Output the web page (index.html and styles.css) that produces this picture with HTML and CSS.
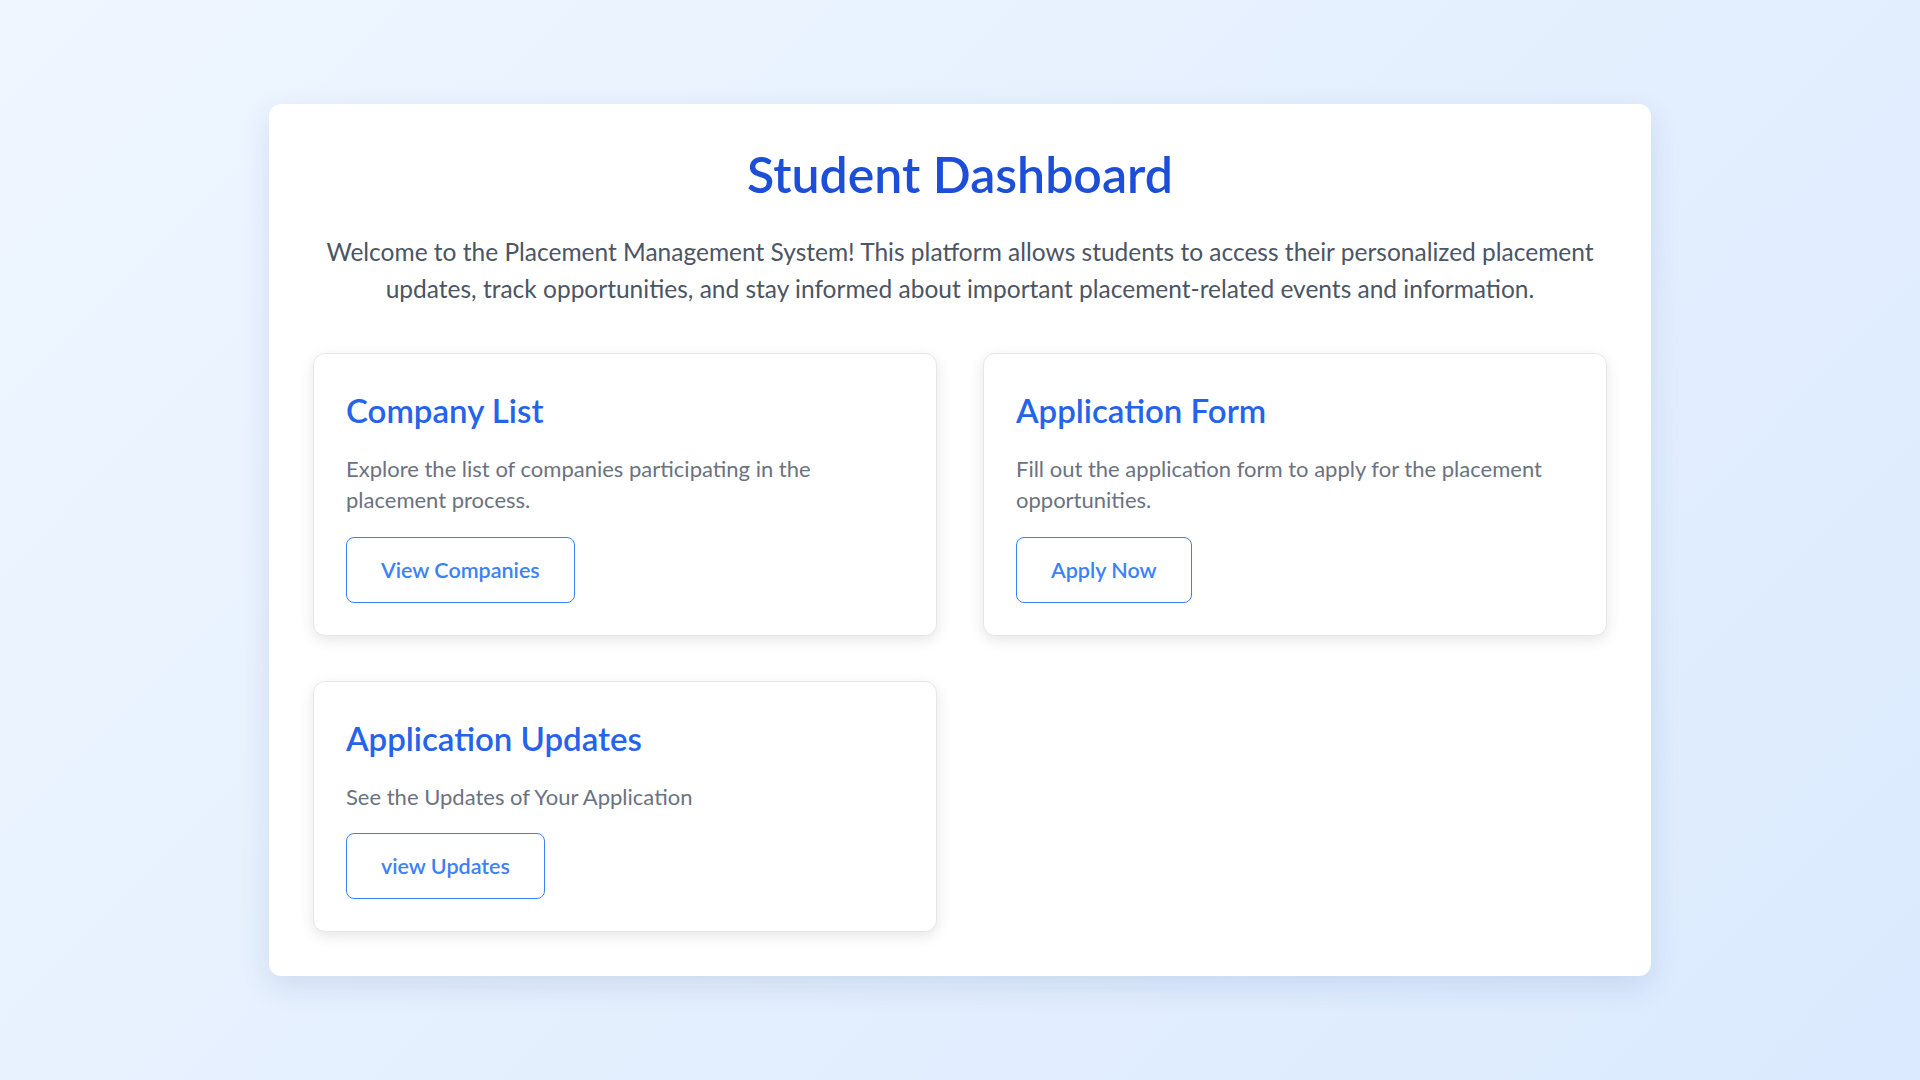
FILE: index.html
```html
<!DOCTYPE html>
<html lang="en">
<head>
<meta charset="UTF-8">
<title>Student Dashboard</title>
<link rel="stylesheet" href="styles.css">
</head>
<body>
  <main class="dashboard">
    <h1 class="dashboard-title">Student Dashboard</h1>
    <p class="dashboard-intro">Welcome to the Placement Management System! This platform allows students to access their personalized placement updates, track opportunities, and stay informed about important placement-related events and information.</p>
    <div class="card-grid">
      <section class="card">
        <h2 class="card-title">Company List</h2>
        <p class="card-text">Explore the list of companies participating in the placement process.</p>
        <a class="card-button" href="#">View Companies</a>
      </section>
      <section class="card">
        <h2 class="card-title">Application Form</h2>
        <p class="card-text">Fill out the application form to apply for the placement opportunities.</p>
        <a class="card-button" href="#">Apply Now</a>
      </section>
      <section class="card">
        <h2 class="card-title">Application Updates</h2>
        <p class="card-text">See the Updates of Your Application</p>
        <a class="card-button" href="#">view Updates</a>
      </section>
    </div>
  </main>
</body>
</html>
```
FILE: styles.css
```css
* {
  box-sizing: border-box;
}

html, body {
  margin: 0;
  padding: 0;
}

body {
  min-height: 100vh;
  display: flex;
  align-items: center;
  justify-content: center;
  background: linear-gradient(135deg, #eff6ff 0%, #dbeafe 100%);
  font-family: Lato, "Open Sans", sans-serif;
}

.dashboard {
  width: 1382px;
  background: #ffffff;
  border-radius: 12px;
  padding: 40px 44px 44px;
  box-shadow: 0 10px 30px rgba(30, 64, 120, 0.12);
}

.dashboard-title {
  margin: 0;
  text-align: center;
  font-size: 50px;
  line-height: 1.2;
  font-weight: 600;
  color: #1d4ed8;
}

.dashboard-intro {
  margin: 30px 0 45px;
  text-align: center;
  font-size: 24.5px;
  line-height: 36.7px;
  color: #4b5563;
}

.card-grid {
  display: grid;
  grid-template-columns: 1fr 1fr;
  gap: 45px 46px;
  align-items: start;
}

.card {
  background: #ffffff;
  border: 1px solid #e5e7eb;
  border-radius: 12px;
  padding: 32px;
  box-shadow: 0 4px 14px rgba(0, 0, 0, 0.1);
}

.card-title {
  margin: 0;
  font-size: 33px;
  line-height: 48px;
  font-weight: 600;
  color: #2563eb;
}

.card-text {
  margin: 19px 0 20.5px;
  font-size: 22px;
  line-height: 31.7px;
  color: #6b7280;
}

.card-button {
  display: inline-block;
  padding: 16px 34px;
  border: 1px solid #3b82f6;
  border-radius: 8px;
  font-size: 21.5px;
  line-height: 32px;
  font-weight: 600;
  color: #3b82f6;
  text-decoration: none;
  background: #ffffff;
}
```
